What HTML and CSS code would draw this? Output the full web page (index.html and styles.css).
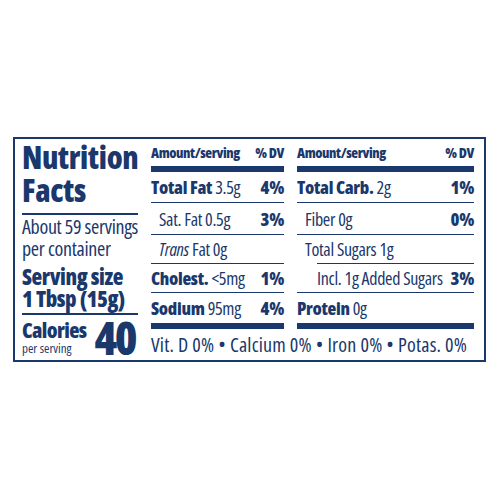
FILE: index.html
```html
<!DOCTYPE html>
<html lang="en">
<head>
    <meta charset="UTF-8">
    <title>Nutrition Facts</title>
    <link rel="stylesheet" href="styles.css">
</head>
<body>
    <div class="label">
        <div class="side">
            <h1 class="title">Nutrition<br>Facts</h1>
            <p class="servings">About 59 servings<br>per container</p>
            <p class="size">Serving size<br>1 Tbsp (15g)</p>
            <div class="calories">
                <div>
                    <div class="cal-word">Calories</div>
                    <div class="cal-sub">per serving</div>
                </div>
                <div class="cal-num">40</div>
            </div>
        </div>

        <div class="table">
            <div class="head"><span>Amount/serving</span><span>% DV</span></div>
            <div class="row"><span><b>Total Fat</b> 3.5g</span><b>4%</b></div>
            <div class="row indent"><span>Sat. Fat 0.5g</span><b>3%</b></div>
            <div class="row indent"><span><i>Trans</i> Fat 0g</span></div>
            <div class="row"><span><b>Cholest.</b> &lt;5mg</span><b>1%</b></div>
            <div class="row last"><span><b>Sodium</b> 95mg</span><b>4%</b></div>
        </div>

        <div class="table">
            <div class="head"><span>Amount/serving</span><span>% DV</span></div>
            <div class="row"><span><b>Total Carb.</b> 2g</span><b>1%</b></div>
            <div class="row indent"><span>Fiber 0g</span><b>0%</b></div>
            <div class="row indent short"><span>Total Sugars 1g</span></div>
            <div class="row indent2"><span>Incl. 1g Added Sugars</span><b>3%</b></div>
            <div class="row last"><span><b>Protein</b> 0g</span></div>
        </div>

        <div class="vitamins">Vit. D 0% &bull; Calcium 0% &bull; Iron 0% &bull; Potas. 0%</div>
    </div>
</body>
</html>
```

FILE: styles.css
```css
body {
    margin: 0;
    background: #fff;
    color: #1a386c;
    font-family: "Open Sans", sans-serif;
    font-stretch: 75%;
}

b {
    font-weight: 800;
}

.label {
    box-sizing: border-box;
    width: 473px;
    height: 225px;
    margin: 137px 0 0 13px;
    border: 2px solid #1a386c;
    padding: 0 10px 0 7px;
    display: grid;
    grid-template-columns: 116px 133px 177px;
    grid-template-rows: 190px 1fr;
    column-gap: 13px;
    white-space: nowrap;
}

.side {
    grid-row: 1 / 3;
    padding-top: 2px;
}

.title {
    margin: 0;
    font-size: 31px;
    line-height: 33px;
    font-weight: 800;
    letter-spacing: -0.3px;
    padding-bottom: 6px;
    border-bottom: 2px solid #1a386c;
}

.servings {
    margin: 1px 0 0;
    font-size: 20px;
    line-height: 22px;
    letter-spacing: -0.3px;
}

.size {
    margin: 5px 0 0;
    font-size: 22px;
    line-height: 22px;
    font-weight: 800;
    letter-spacing: -0.4px;
    padding-bottom: 4px;
    border-bottom: 2px solid #1a386c;
}

.calories {
    display: flex;
    justify-content: space-between;
    align-items: center;
    padding: 4px 3px 0 0;
}

.cal-word {
    font-size: 21px;
    line-height: 22px;
    font-weight: 800;
    letter-spacing: -0.6px;
}

.cal-sub {
    font-size: 13px;
    line-height: 14px;
}

.cal-num {
    font-size: 46px;
    line-height: 36px;
    font-weight: 800;
    letter-spacing: -2.5px;
}

.table {
    padding-top: 5px;
}

.head {
    display: flex;
    justify-content: space-between;
    font-size: 14px;
    line-height: 18px;
    font-weight: 800;
    letter-spacing: -0.4px;
    height: 22px;
    border-bottom: 6px solid #1a386c;
}

.row {
    display: flex;
    justify-content: space-between;
    align-items: center;
    box-sizing: border-box;
    height: 29px;
    font-size: 18px;
    letter-spacing: -0.3px;
    border-bottom: 1px solid #1a386c;
}

.row:nth-child(2) {
    height: 31px;
}

.row:nth-child(3) {
    height: 32px;
}

.row.last {
    border-bottom: 6px solid #1a386c;
    height: 36px;
}

.indent span {
    padding-left: 8px;
}

.indent2 span {
    padding-left: 20px;
}

.short {
    margin-left: 20px;
}

.short span {
    margin-left: -20px;
}

.vitamins {
    grid-column: 2 / 4;
    display: flex;
    align-items: center;
    font-size: 20px;
    letter-spacing: 0.2px;
}
```
